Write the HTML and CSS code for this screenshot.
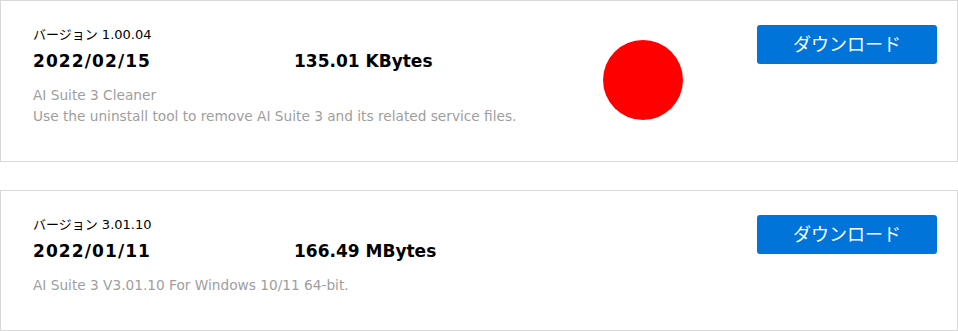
FILE: index.html
```html
<!DOCTYPE html>
<html lang="ja">
<head>
<meta charset="utf-8">
<link rel="stylesheet" href="styles.css">
</head>
<body>
<div class="list">
  <div class="card">
    <div class="info">
      <div class="version">バージョン 1.00.04</div>
      <div class="meta">
        <span class="date">2022/02/15</span>
        <span class="size">135.01 KBytes</span>
      </div>
      <div class="desc">AI Suite 3 Cleaner<br>Use the uninstall tool to remove AI Suite 3 and its related service files.</div>
    </div>
    <div class="dot"></div>
    <button class="btn">ダウンロード</button>
  </div>
  <div class="card">
    <div class="info">
      <div class="version">バージョン 3.01.10</div>
      <div class="meta">
        <span class="date">2022/01/11</span>
        <span class="size">166.49 MBytes</span>
      </div>
      <div class="desc">AI Suite 3 V3.01.10 For Windows 10/11 64-bit.</div>
    </div>
    <button class="btn">ダウンロード</button>
  </div>
</div>
</body>
</html>
```
FILE: styles.css
```css
html, body {
  margin: 0;
  padding: 0;
  background: #fff;
}
body {
  font-family: "DejaVu Sans", Verdana, "Noto Sans CJK JP", sans-serif;
  color: #000;
}
.list {
  display: flex;
  flex-direction: column;
  gap: 28px;
  width: 958px;
}
.card {
  position: relative;
  box-sizing: border-box;
  border: 1px solid #d9d9d9;
  display: flex;
  justify-content: space-between;
  align-items: flex-start;
  padding: 24px 20px 34px 32px;
}
.version {
  font-family: "DejaVu Sans", "Noto Sans CJK JP", sans-serif;
  font-size: 13px;
  line-height: 18px;
  margin-top: 1px;
}
.meta {
  display: grid;
  grid-template-columns: 261px auto;
  font-size: 17px;
  font-weight: bold;
  line-height: 24px;
  margin-top: 5px;
}
.date {
  letter-spacing: 1.1px;
}
.desc {
  margin-top: 12px;
  font-size: 13.7px;
  line-height: 21px;
  color: #9e9e9e;
}
.dot {
  position: absolute;
  left: 602px;
  top: 39px;
  width: 80px;
  height: 80px;
  border-radius: 50%;
  background: #ff0000;
}
.btn {
  width: 180px;
  height: 39px;
  border: none;
  border-radius: 3px;
  background: #0074d9;
  color: #fff;
  font-family: "Noto Sans CJK JP", sans-serif;
  font-size: 18px;
  line-height: 37px;
  padding: 0 0 2px;
  cursor: pointer;
}
```
